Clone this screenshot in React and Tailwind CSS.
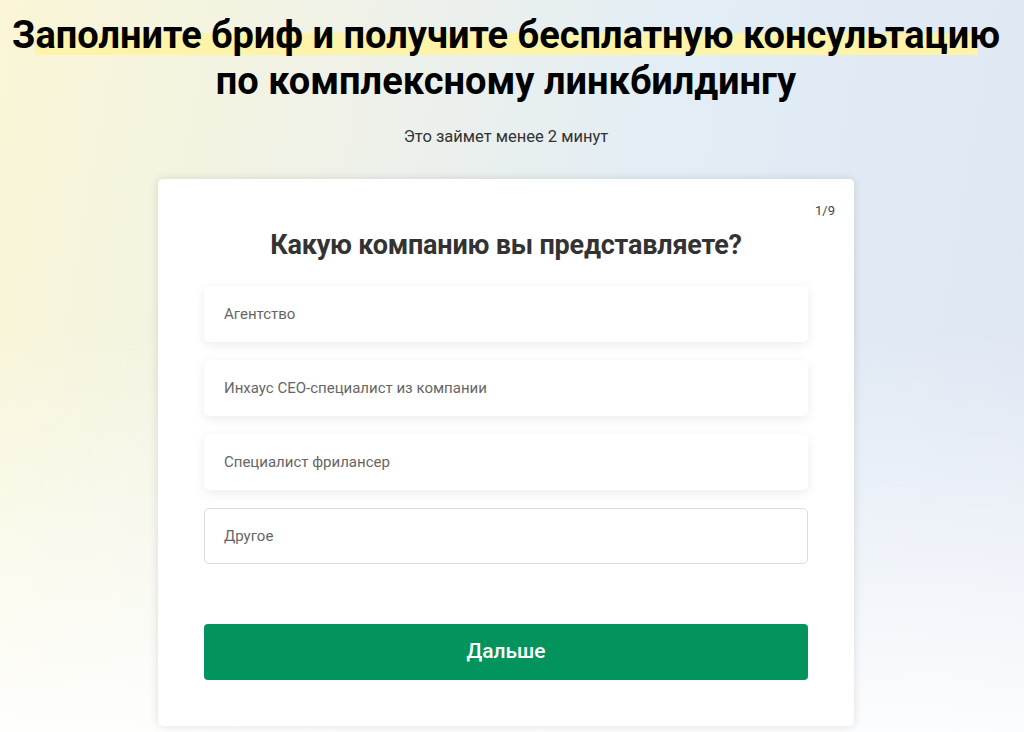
const OPTIONS = [
  "Агентство",
  "Инхаус СЕО-специалист из компании",
  "Специалист фрилансер",
]

export default function App() {
  return (
    <div className="min-h-[732px] w-full bg-[linear-gradient(to_bottom,transparent_45%,rgba(255,255,255,0.9)_100%),linear-gradient(100deg,#faf6d6_0%,#eef1ea_35%,#e2edf5_60%,#dfe6f3_100%)] font-['Roboto',sans-serif] text-[#222]">
      <div className="flex flex-col items-center pr-[12px] pt-[12px]">
        <h1 className="whitespace-nowrap text-center text-[38px] font-bold leading-[46px] text-black">
          <span className="relative inline-block">
            <span className="absolute left-[23px] right-[22px] top-[21px] h-[22px] bg-[#fdf3a9]" />
            <span className="relative">Заполните бриф и получите бесплатную консультацию</span>
          </span>
          <br />
          по комплексному линкбилдингу
        </h1>
        <p className="mt-[22px] text-[16.5px] leading-[22px] text-[#333]">Это займет менее 2 минут</p>

        <div className="mt-[31px] flex w-[696px] flex-col rounded-[5px] bg-white px-[46px] pb-[46px] pt-[24px] shadow-[0_0_10px_rgba(0,0,0,0.12)]">
          <div className="flex justify-end">
            <span className="mr-[-27px] text-[13px] leading-[16px] text-[#444]">1/9</span>
          </div>
          <h2 className="mt-[10px] text-center text-[27px] font-bold leading-[32px] tracking-[-0.2px] text-[#333]">
            Какую компанию вы представляете?
          </h2>
          <div className="mt-[25px] flex flex-col gap-[18px]">
            {OPTIONS.map((label) => (
              <button
                key={label}
                type="button"
                className="flex h-[56px] items-center rounded-[5px] bg-white px-[20px] text-left text-[15px] text-[#666] shadow-[0_3px_12px_rgba(0,0,0,0.08)]"
              >
                {label}
              </button>
            ))}
            <div className="flex h-[56px] items-center rounded-[5px] border border-[#dcdcdc] bg-white px-[19px] text-[15px] text-[#666]">
              Другое
            </div>
          </div>
          <button
            type="button"
            className="mt-[60px] h-[56px] rounded-[4px] bg-[#02945c] text-[21px] font-medium text-white"
          >
            Дальше
          </button>
        </div>
      </div>
    </div>
  )
}
